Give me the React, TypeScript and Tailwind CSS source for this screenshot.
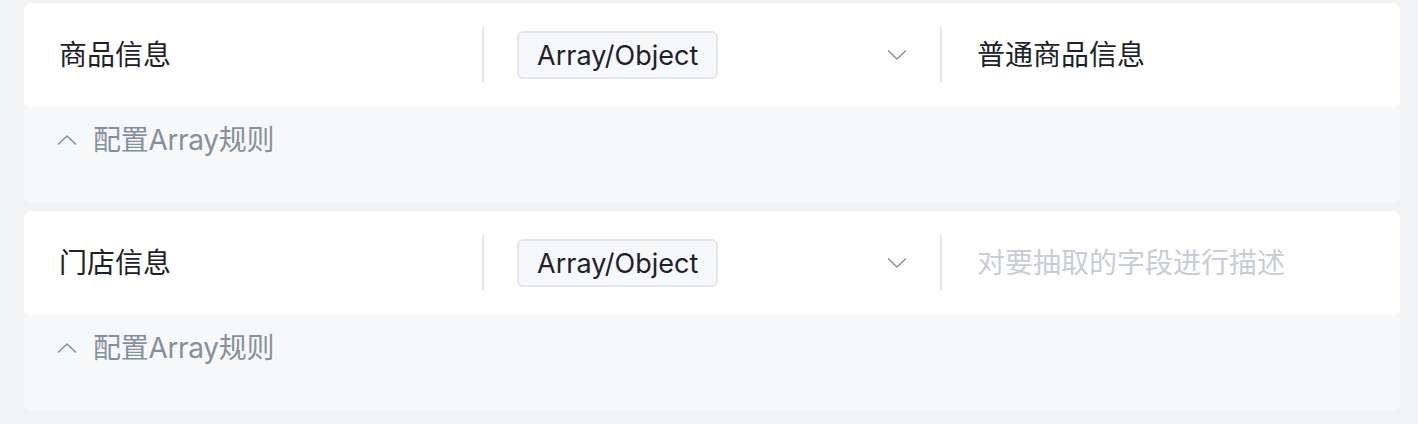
interface FieldRow {
  name: string;
  type: string;
  desc: string;
}

const rows: FieldRow[] = [
  { name: '商品信息', type: 'Array/Object', desc: '普通商品信息' },
  { name: '门店信息', type: 'Array/Object', desc: '' },
];

const font = { fontFamily: 'Inter, "Noto Sans CJK SC", sans-serif' };

function Chevron({ up = false }: { up?: boolean }) {
  return (
    <svg width="20" height="12" viewBox="0 0 20 12" fill="none" className={up ? 'rotate-180' : ''}>
      <polyline points="1.5,2 10,10 18.5,2" stroke="currentColor" strokeWidth="1.6" strokeLinecap="round" strokeLinejoin="round" />
    </svg>
  );
}

function FieldCard({ row }: { row: FieldRow }) {
  return (
    <div className="h-[200px] rounded-[8px] bg-[#f7f8fa]">
      {/* main row */}
      <div className="h-[104px] rounded-[8px] bg-white flex items-center">
        <div className="w-[458px] pl-[35px] text-[28px] leading-[36px] text-[#1d2129]">{row.name}</div>
        <div className="w-[2px] h-[56px] bg-[#e5e6eb]" />
        <div className="w-[456px] pl-[33px] pr-[33px] flex items-center justify-between">
          <span className="h-[48px] px-[18px] pt-[3px] flex items-center rounded-[6px] border-2 border-[#e5e6eb] bg-[#f7f8fa] text-[27px] text-[#1d2129]">
            {row.type}
          </span>
          <span className="text-[#86909c]">
            <Chevron />
          </span>
        </div>
        <div className="w-[2px] h-[56px] bg-[#e5e6eb]" />
        <div className="pl-[35px] text-[28px] leading-[36px]">
          {row.desc ? (
            <span className="text-[#1d2129]">{row.desc}</span>
          ) : (
            <span className="text-[#c9cdd4]">对要抽取的字段进行描述</span>
          )}
        </div>
      </div>
      {/* array rule toggle */}
      <div className="pl-[33px] pt-[17px] flex items-center gap-[16px] text-[#86909c]">
        <Chevron up />
        <span className="text-[28px] leading-[32px] tracking-[-0.3px]">配置Array规则</span>
      </div>
    </div>
  );
}

export default function App() {
  return (
    <div className="min-h-[424px] bg-[#f2f3f5] px-[24px] pt-[3px] pr-[18px] flex flex-col gap-[8px]" style={font}>
      {rows.map((r) => (
        <FieldCard key={r.name} row={r} />
      ))}
    </div>
  );
}
